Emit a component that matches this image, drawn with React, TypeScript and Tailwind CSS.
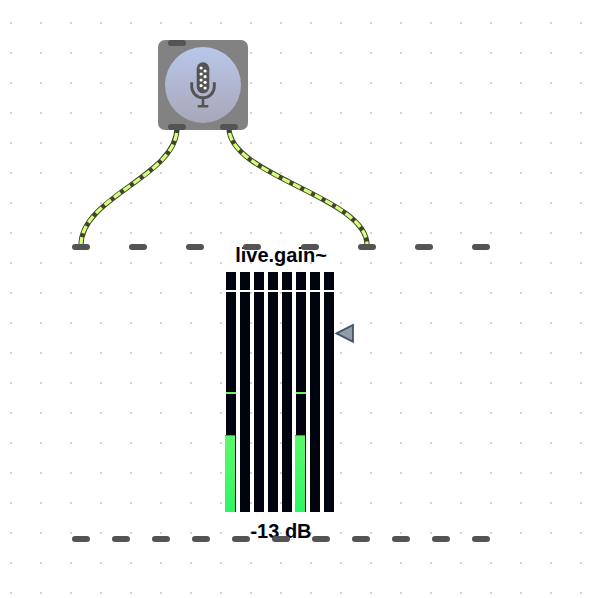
const cords = [
  { id: "left", d: "M177 128 C177 176 81 197 81 245" },
  { id: "right", d: "M229 128 C229 176 367 197 367 245" },
];

const channels = [true, false, false, false, false, true, false, false];

function Port() {
  return <span className="block h-[6px] w-[18px] shrink-0 rounded-full bg-[#545454]" />;
}

function Grid() {
  return (
    <svg className="absolute inset-0" width="604" height="598">
      <defs>
        <pattern id="dots" x="10" y="22" width="30" height="30" patternUnits="userSpaceOnUse">
          <rect width="2" height="2" fill="#d4d4d4" />
        </pattern>
      </defs>
      <rect width="604" height="598" fill="url(#dots)" />
    </svg>
  );
}

function MicObject() {
  return (
    <div className="absolute left-[158px] top-[40px] flex h-[90px] w-[90px] flex-col justify-between rounded-[7px] bg-[#828282]">
      <div className="flex pl-[10px]">
        <Port />
      </div>
      <div className="absolute left-[7px] top-[7px] flex h-[76px] w-[76px] items-center justify-center rounded-full bg-linear-to-b from-[#b9c7ea] to-[#a8a7b9]">
        <svg width="76" height="76" viewBox="0 0 76 76" fill="none">
          <rect x="31.7" y="15.3" width="12.6" height="31" rx="6.3" fill="#545454" />
          <path d="M26.7 35.2v4.3a11.3 11.3 0 0 0 22.6 0v-4.3" stroke="#545454" strokeWidth="2.9" />
          <path d="M38 51v8M32.7 59.2h10.6" stroke="#545454" strokeWidth="2.5" />
          <g fill="#fff">
            {[21, 27, 33, 38.6].map((y) => (
              <circle key={y} cx="36.1" cy={y} r="1.6" />
            ))}
            {[24, 29.7, 35.3, 41].map((y) => (
              <circle key={y} cx="40.1" cy={y} r="1.6" />
            ))}
          </g>
        </svg>
      </div>
      <div className="flex gap-[34px] pl-[10px]">
        <Port />
        <Port />
      </div>
    </div>
  );
}

function Cords() {
  return (
    <svg className="absolute inset-0" width="604" height="598" fill="none">
      {cords.map((c) => (
        <g key={c.id}>
          <path d={c.d} stroke="#414529" strokeWidth="5.2" />
          <path d={c.d} stroke="#d3ff7c" strokeWidth="3.3" strokeDasharray="8 4" strokeDashoffset="-5" />
        </g>
      ))}
    </svg>
  );
}

function Meter({ active }: { active: boolean }) {
  return (
    <div className="flex w-[10px] flex-col gap-[2px]">
      <div className="h-[18px] bg-[#00040f]" />
      <div className="flex h-[220px] flex-col bg-[#00040f]">
        {active && (
          <>
            <div className="mt-[100px] h-[2px] bg-[#6cf163]" />
            <div className="-ml-px mt-[41px] h-[77px] w-[10px] border-t border-[#3d9f52] bg-linear-to-b from-[#59f969] to-[#2af665]" />
          </>
        )}
      </div>
    </div>
  );
}

function GainObject() {
  return (
    <div className="absolute left-[72px] top-[244px] h-[298px] w-[418px]">
      <div className="flex flex-col items-center font-['Liberation_Sans',Arial,sans-serif] text-[20px] font-bold leading-[24px] text-[#00040f]">
        <div className="-mt-px whitespace-pre">live.gain~</div>
        <div className="mt-[5px] flex gap-[4px] pr-[2px]">
          {channels.map((active, i) => (
            <Meter key={i} active={active} />
          ))}
        </div>
        <div className="mt-[7px]">-13 dB</div>
      </div>
      <svg className="absolute left-[262px] top-[79px]" width="22" height="22" fill="none">
        <path d="M2.5 10.4 19 2v16.8Z" fill="#909caa" stroke="#445366" strokeWidth="1.8" />
      </svg>
      <div className="absolute inset-0 flex flex-col justify-between">
        <div className="flex justify-between">
          {Array.from({ length: 8 }, (_, i) => (
            <Port key={i} />
          ))}
        </div>
        <div className="flex justify-between">
          {Array.from({ length: 11 }, (_, i) => (
            <Port key={i} />
          ))}
        </div>
      </div>
    </div>
  );
}

export default function App() {
  return (
    <main className="relative h-[598px] w-[604px] overflow-hidden bg-white">
      <Grid />
      <Cords />
      <MicObject />
      <GainObject />
    </main>
  );
}
